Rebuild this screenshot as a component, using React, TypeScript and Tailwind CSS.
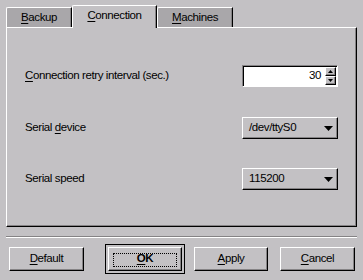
import React from "react";

const raised =
  "border-t border-l border-white border-r border-b border-r-black border-b-black shadow-[inset_-1px_-1px_0_#858385]";

function U({ children }: { children: React.ReactNode }) {
  return <span className="underline underline-offset-[2px]">{children}</span>;
}

function Tab({
  first,
  rest,
  active,
  width,
}: {
  first: string;
  rest: string;
  active?: boolean;
  width: string;
}) {
  if (active) {
    return (
      <div
        className={`${width} relative z-10 -mb-px flex h-[23px] items-center justify-center rounded-tl-[2px] border-t border-l border-white border-r border-r-black bg-[#c3c1c4] pb-[2px] shadow-[inset_-1px_0_0_#858385]`}
      >
        <span>
          <U>{first}</U>
          {rest}
        </span>
      </div>
    );
  }
  return (
    <div
      className={`${width} flex h-[20px] items-center justify-center rounded-tl-[2px] border-t border-l border-white border-r border-r-black bg-[#a9a7aa] shadow-[inset_-1px_0_0_#858385]`}
    >
      <span>
        <U>{first}</U>
        {rest}
      </span>
    </div>
  );
}

function Arrow() {
  return (
    <svg width="9" height="5" viewBox="0 0 9 5">
      <polygon points="0,0 9,0 4.5,5" fill="#000" />
    </svg>
  );
}

function Combo({ value }: { value: string }) {
  return (
    <div
      className={`${raised} flex h-[22px] w-[96px] items-center justify-between bg-[#c3c1c4] pl-[6px] pr-[4px]`}
    >
      <span>{value}</span>
      <Arrow />
    </div>
  );
}

function SpinBox({ value }: { value: number }) {
  return (
    <div className="flex h-[22px] w-[96px] items-stretch border-t border-l border-[#858385] border-r border-b border-r-white border-b-white bg-white shadow-[inset_1px_1px_0_#000]">
      <div className="flex flex-1 items-center justify-end pr-[4px]">{value}</div>
      <div className="flex w-[12px] flex-col py-px pr-px">
        <div className={`${raised} flex flex-1 items-center justify-center bg-[#c3c1c4]`}>
          <svg width="5" height="3" viewBox="0 0 5 3">
            <polygon points="0,3 5,3 2.5,0" fill="#000" />
          </svg>
        </div>
        <div className={`${raised} flex flex-1 items-center justify-center bg-[#c3c1c4]`}>
          <svg width="5" height="3" viewBox="0 0 5 3">
            <polygon points="0,0 5,0 2.5,3" fill="#000" />
          </svg>
        </div>
      </div>
    </div>
  );
}

function Button({ first, rest, width }: { first: string; rest: string; width: string }) {
  return (
    <div className={`${raised} ${width} flex h-[24px] items-center justify-center bg-[#c3c1c4]`}>
      <span>
        <U>{first}</U>
        {rest}
      </span>
    </div>
  );
}

export default function App() {
  return (
    <div className="h-[280px] w-[363px] bg-[#c3c1c4] px-[6px] pt-[5px] font-['Liberation_Sans',Arial,sans-serif] text-[11.5px] tracking-[-0.4px] text-black">
      <div className="flex h-[22px] items-end">
        <Tab first="B" rest="ackup" width="w-[66px]" />
        <Tab first="C" rest="onnection" width="w-[85px]" active />
        <Tab first="M" rest="achines" width="w-[76px]" />
      </div>

      <div className="h-[200px] w-[351px] border-t border-l border-white border-r border-b border-r-black border-b-black px-[18px] pt-[37px] shadow-[inset_-1px_-1px_0_#858385]">
        <div className="flex h-[22px] items-center justify-between">
          <span>
            <U>C</U>onnection retry interval (sec.)
          </span>
          <SpinBox value={30} />
        </div>
        <div className="mt-[30px] flex h-[22px] items-center justify-between">
          <span>
            Serial <U>d</U>evice
          </span>
          <Combo value="/dev/ttyS0" />
        </div>
        <div className="mt-[29px] flex h-[22px] items-center justify-between">
          <span>Serial speed</span>
          <Combo value="115200" />
        </div>
      </div>

      <div className="mt-[9px] h-[2px] border-t border-[#858385] border-b border-b-white" />

      <div className="mt-[6px] flex h-[30px] items-center pl-[3px]">
        <Button first="D" rest="efault" width="w-[75px]" />
        <div className="ml-[21px] border border-black p-[2px]">
          <div className={`${raised} relative flex h-[24px] w-[74px] items-center justify-center bg-[#c3c1c4] font-bold`}>
            <div className="absolute inset-x-[4px] top-[5px] bottom-[3px] border border-dotted border-black" />
            <span>
              <U>O</U>K
            </span>
          </div>
        </div>
        <div className="ml-[9px]">
          <Button first="A" rest="pply" width="w-[74px]" />
        </div>
        <div className="ml-[12px]">
          <Button first="C" rest="ancel" width="w-[75px]" />
        </div>
      </div>
    </div>
  );
}
